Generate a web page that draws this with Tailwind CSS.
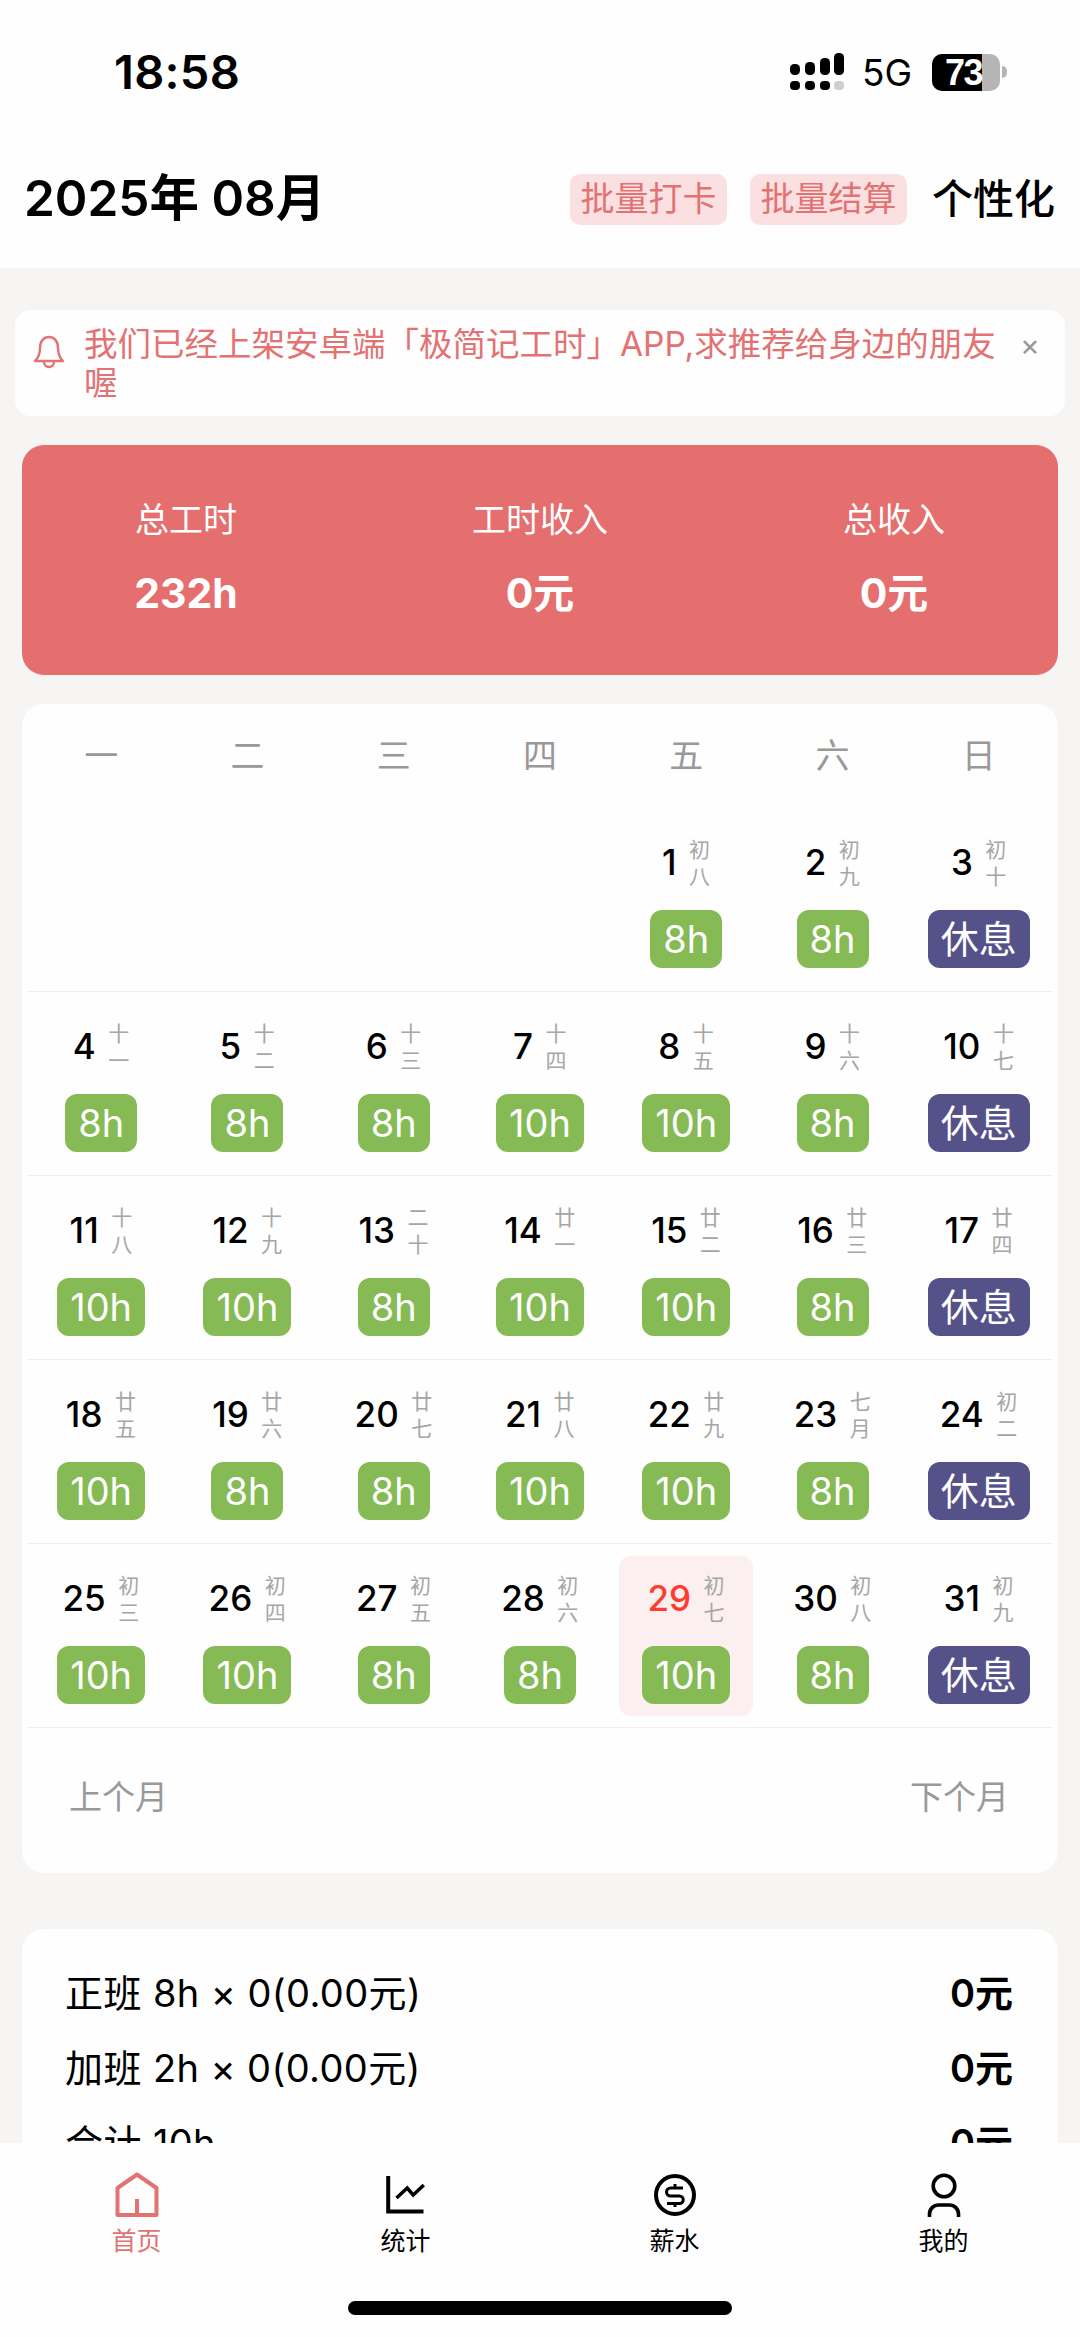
<!DOCTYPE html>
<html lang="zh-CN">
<head>
    <meta charset="UTF-8">
    <meta name="viewport" content="width=device-width, initial-scale=1.0">
    <title>极简记工时</title>
    <script src="https://cdn.jsdelivr.net/npm/@tailwindcss/browser@4"></script>
</head>
<body class="bg-[#f6f5f3] font-['Inter','Noto_Sans_CJK_SC',sans-serif] text-black">
<div class="w-[1080px] h-[2337px] flex flex-col overflow-hidden">

    <!-- status bar + title -->
    <header class="bg-[#fefefe] h-[268px] shrink-0 flex flex-col">
        <div class="h-[144px] pt-[48px] pl-[114px] pr-[73px] flex justify-between items-start">
            <span class="text-[47px] leading-[48px] font-semibold tracking-[0.3px]">18:58</span>
            <div class="flex items-center h-[48px]">
                <svg width="54" height="38" viewBox="0 0 54 38">
                    <rect x="0" y="11" width="10" height="11" rx="4.5"/>
                    <rect x="15" y="9" width="10" height="13" rx="4.5"/>
                    <rect x="30" y="5" width="10" height="17" rx="4.5"/>
                    <rect x="44" y="0" width="10" height="22" rx="4.5"/>
                    <rect x="0" y="28" width="10" height="9" rx="4"/>
                    <rect x="15" y="28" width="10" height="9" rx="4"/>
                    <rect x="30" y="28" width="10" height="9" rx="4"/>
                    <rect x="44" y="28" width="10" height="9" rx="4" fill="#cfcfcf"/>
                </svg>
                <span class="ml-[18px] text-[37px] leading-none">5G</span>
                <div class="ml-[20px] w-[68px] h-[37px] rounded-[10px] bg-[#b5b5b5]">
                    <div class="w-[50px] h-full rounded-l-[10px] bg-black text-white font-['Liberation_Sans',sans-serif] text-[36px] leading-[37px] font-bold text-right tracking-[-1.5px]">73</div>
                </div>
                <div class="ml-[2px] w-[5px] h-[12px] rounded-r-full bg-[#b5b5b5]"></div>
            </div>
        </div>
        <div class="flex items-center justify-between pl-[24px] pr-[25px] h-[110px]">
            <h1 class="text-[49.5px] font-semibold leading-none">2025年 08月</h1>
            <div class="flex items-center">
                <button class="w-[157px] h-[51px] rounded-[10px] bg-[#fae0e0] text-[#e37273] text-[34px] leading-none">批量打卡</button>
                <button class="ml-[23px] w-[157px] h-[51px] rounded-[10px] bg-[#fae0e0] text-[#e37273] text-[34px] leading-none">批量结算</button>
                <span class="ml-[25px] text-[41px] font-medium leading-none">个性化</span>
            </div>
        </div>
    </header>

    <main class="flex-1 overflow-hidden relative">
        <!-- notice -->
        <div class="mx-[15px] mt-[42px] h-[106px] bg-[#fefefe] rounded-[16px] flex pl-[18px] pt-[15px]">
            <svg class="mt-[10px] shrink-0" width="32" height="34" viewBox="0 0 32 34" fill="none" stroke="#e37273" stroke-width="2.4" stroke-linejoin="round" stroke-linecap="round">
                <path d="M2 26C6 22 7 19 7 13C7 6 11 2 16 2C21 2 25 6 25 13C25 19 26 22 30 26Z"/>
                <path d="M11 27a5 5 0 0 0 10 0"/>
            </svg>
            <p class="ml-[19px] w-[915px] text-[33.5px] leading-[39px] text-[#e37273]">我们已经上架安卓端「极简记工时」APP,求推荐给身边的朋友喔</p>
            <span class="ml-[21px] mt-[1px] text-[30px] leading-[38px] text-[#999999]">×</span>
        </div>

        <!-- summary -->
        <section class="mx-[22px] mt-[29px] h-[230px] bg-[#e56e6e] rounded-[22px] text-white grid grid-cols-[354px_354px_354px] justify-center pt-[55px] text-center">
            <div><div class="text-[34px] leading-[40px]">总工时</div><div class="mt-[33px] text-[41px] leading-[40px] font-bold">232h</div></div>
            <div><div class="text-[34px] leading-[40px]">工时收入</div><div class="mt-[33px] text-[41px] leading-[40px] font-bold">0元</div></div>
            <div><div class="text-[34px] leading-[40px]">总收入</div><div class="mt-[33px] text-[41px] leading-[40px] font-bold">0元</div></div>
        </section>

        <!-- calendar -->
        <section class="mx-[22px] mt-[29px] h-[1169px] bg-[#fefefe] rounded-[22px] px-[6px]">
            <div class="grid grid-cols-7 h-[104px] items-center text-center text-[34px] text-[#999999] pb-[1px]">
                <span>一</span><span>二</span><span>三</span><span>四</span><span>五</span><span>六</span><span>日</span>
            </div>
            <div id="calendar"></div>
            <div class="flex justify-between pl-[41px] pr-[43px] pt-[49px] text-[33px] leading-[40px] text-[#999999]">
                <span>上个月</span><span>下个月</span>
            </div>
        </section>

        <!-- salary -->
        <section class="mx-[22px] mt-[56px] bg-[#fefefe] rounded-[22px] pl-[43px] pr-[45px] pt-[37px] text-[38px] leading-[54px]">
            <div class="flex justify-between h-[75px]"><span class="tracking-[0.4px]">正班 8h × 0(0.00元)</span><span class="font-semibold">0元</span></div>
            <div class="flex justify-between h-[75px]"><span class="tracking-[0.4px]">加班 2h × 0(0.00元)</span><span class="font-semibold">0元</span></div>
            <div class="flex justify-between h-[75px]"><span class="tracking-[0.4px]">合计 10h</span><span class="font-semibold">0元</span></div>
        </section>
    </main>

    <!-- tab bar -->
    <nav class="bg-[#fefefe] h-[194px] shrink-0 flex flex-col relative">
        <div class="grid grid-cols-4 px-[2px] pt-[28px] text-center text-[25px] leading-[30px]">
            <div class="flex flex-col items-center text-[#e37273]">
                <svg width="48" height="48" viewBox="0 0 48 48" fill="none" stroke="#e37273" stroke-width="4" stroke-linejoin="round">
                    <path d="M4.500 17 24 3.500 43.500 17V44H4.500Z"/>
                    <path d="M24 28V44"/>
                </svg>
                <span class="mt-[7px]">首页</span>
            </div>
            <div class="flex flex-col items-center">
                <svg width="48" height="48" viewBox="0 0 48 48" fill="none" stroke="#000" stroke-width="4">
                    <path d="M6.200 5V40.500H41.500"/>
                    <path d="M14.500 27 25.200 17l6 7L41.800 14" stroke-width="3.500"/>
                </svg>
                <span class="mt-[7px]">统计</span>
            </div>
            <div class="flex flex-col items-center">
                <svg width="48" height="48" viewBox="0 0 48 48" fill="none" stroke="#000" stroke-width="4">
                    <circle cx="24" cy="24" r="19"/>
                    <path d="M32 17H19.500a4 4 0 0 0 0 8H28.500a3.750 3.750 0 0 1 0 7.500H16" stroke-width="3"/>
                    <path d="M24 13V17M24 32.500V36" stroke-width="3"/>
                </svg>
                <span class="mt-[7px]">薪水</span>
            </div>
            <div class="flex flex-col items-center">
                <svg width="48" height="48" viewBox="0 0 48 48" fill="none" stroke="#000" stroke-width="3.600">
                    <circle cx="24" cy="15" r="10.800"/>
                    <path d="M9.500 46V43a9 9 0 0 1 9-9H29.500a9 9 0 0 1 9 9V46"/>
                </svg>
                <span class="mt-[7px]">我的</span>
            </div>
        </div>
        <div class="absolute left-[348px] top-[158px] w-[384px] h-[14px] rounded-full bg-black"></div>
    </nav>
</div>

<script>
    // [day, lunar, tag], null = empty cell
    const weeks = [
        [null, null, null, null, [1,'初八','8h'], [2,'初九','8h'], [3,'初十','休息']],
        [[4,'十一','8h'], [5,'十二','8h'], [6,'十三','8h'], [7,'十四','10h'], [8,'十五','10h'], [9,'十六','8h'], [10,'十七','休息']],
        [[11,'十八','10h'], [12,'十九','10h'], [13,'二十','8h'], [14,'廿一','10h'], [15,'廿二','10h'], [16,'廿三','8h'], [17,'廿四','休息']],
        [[18,'廿五','10h'], [19,'廿六','8h'], [20,'廿七','8h'], [21,'廿八','10h'], [22,'廿九','10h'], [23,'七月','8h'], [24,'初二','休息']],
        [[25,'初三','10h'], [26,'初四','10h'], [27,'初五','8h'], [28,'初六','8h'], [29,'初七','10h'], [30,'初八','8h'], [31,'初九','休息']],
    ];
    const today = 29;

    function cell(d) {
        if (!d) return '<div></div>';
        const [day, lunar, tag] = d;
        const isToday = day === today;
        const wrap = isToday ? 'bg-[#fbefef]' : '';
        const num = isToday ? 'text-[#ff3b30]' : 'text-black';
        const tagCls = tag === '休息' ? 'bg-[#55528a]' : 'bg-[#86ba55]';
        return `<div class="mx-[6px] h-[160px] mt-[12px] rounded-[12px] flex flex-col items-center ${wrap}">
            <div class="h-[81px] mt-[1px] pt-[2px] flex items-center gap-[12px]">
                <span class="text-[35px] font-medium leading-none ${num}">${day}</span>
                <span class="w-[22px] text-[21px] leading-[27px] text-[#a6a6a6] text-center">${lunar[0]}<br>${lunar[1]}</span>
            </div>
            <div class="mt-[8px] h-[58px] px-[13px] rounded-[12px] text-white text-[38px] leading-[58px] ${tagCls}">${tag}</div>
        </div>`;
    }

    document.getElementById('calendar').innerHTML = weeks.map(w =>
        `<div class="grid grid-cols-7 h-[184px] border-b border-[#f0f0f0]">${w.map(cell).join('')}</div>`
    ).join('');
</script>
</body>
</html>
